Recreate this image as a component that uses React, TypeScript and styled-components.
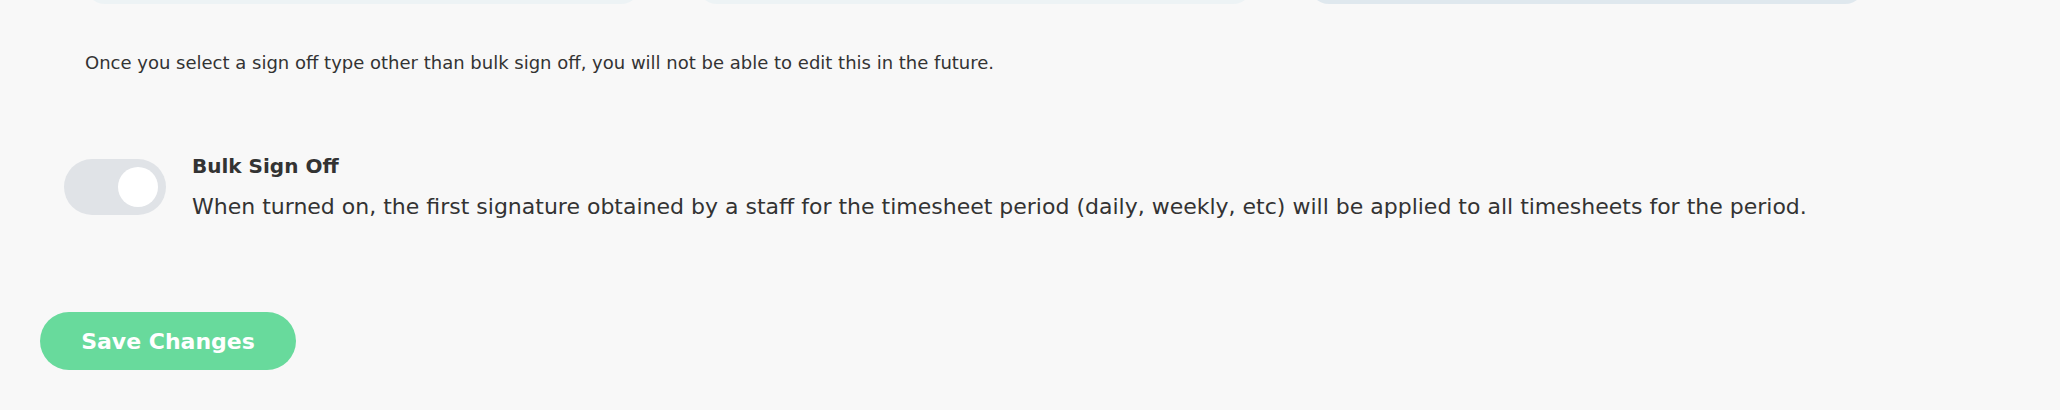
import React from "react";
import styled, { createGlobalStyle } from "styled-components";

const Global = createGlobalStyle`
  html, body { margin: 0; padding: 0; background: #f8f8f8; }
  body { font-family: "DejaVu Sans", "Liberation Sans", sans-serif; color: #333333; }
  * { box-sizing: border-box; }
`;

const Page = styled.div`
  width: 2060px;
  height: 410px;
  overflow: hidden;
  padding: 0 40px;
  display: flex;
  flex-direction: column;
`;

const CardRow = styled.div`
  display: grid;
  grid-template-columns: repeat(3, 556px);
  column-gap: 56px;
  margin: -60px 0 0 45px;
`;

const Card = styled.div<{ $selected?: boolean }>`
  height: 64px;
  border-radius: 20px;
  background: ${(p) => (p.$selected ? "#dfe8ee" : "#edf3f5")};
`;

const Notice = styled.p`
  margin: 47px 0 0 45px;
  font-size: 18px;
  line-height: 24px;
  color: #333333;
`;

const ToggleRow = styled.div`
  display: flex;
  align-items: flex-start;
  gap: 26px;
  margin: 76px 0 0 24px;
`;

const Track = styled.div<{ $on?: boolean }>`
  width: 102px;
  height: 56px;
  border-radius: 28px;
  background: #e0e3e7;
  display: flex;
  align-items: center;
  justify-content: ${(p) => (p.$on ? "flex-end" : "flex-start")};
  padding: 0 8px;
  margin-top: 8px;
  flex-shrink: 0;
`;

const Knob = styled.div`
  width: 40px;
  height: 40px;
  border-radius: 50%;
  background: #ffffff;
`;

const TextCol = styled.div`
  display: flex;
  flex-direction: column;
`;

const Title = styled.div`
  font-size: 20px;
  line-height: 30px;
  font-weight: 700;
  color: #333333;
`;

const Desc = styled.div`
  margin-top: 9px;
  font-size: 22px;
  line-height: 34px;
  color: #333333;
`;

const SaveButton = styled.button`
  margin-top: 88px;
  align-self: flex-start;
  width: 256px;
  height: 58px;
  border: none;
  border-radius: 29px;
  background: #68da9c;
  color: #ffffff;
  font-family: inherit;
  font-size: 22px;
  font-weight: 700;
  cursor: pointer;
`;

export default function App() {
  return (
    <>
      <Global />
      <Page>
        <CardRow>
          <Card />
          <Card />
          <Card $selected />
        </CardRow>
        <Notice>
          Once you select a sign off type other than bulk sign off, you will not be able to edit this in the future.
        </Notice>
        <ToggleRow>
          <Track $on>
            <Knob />
          </Track>
          <TextCol>
            <Title>Bulk Sign Off</Title>
            <Desc>
              When turned on, the first signature obtained by a staff for the timesheet period (daily, weekly, etc) will be applied to all timesheets for the period.
            </Desc>
          </TextCol>
        </ToggleRow>
        <SaveButton>Save Changes</SaveButton>
      </Page>
    </>
  );
}
